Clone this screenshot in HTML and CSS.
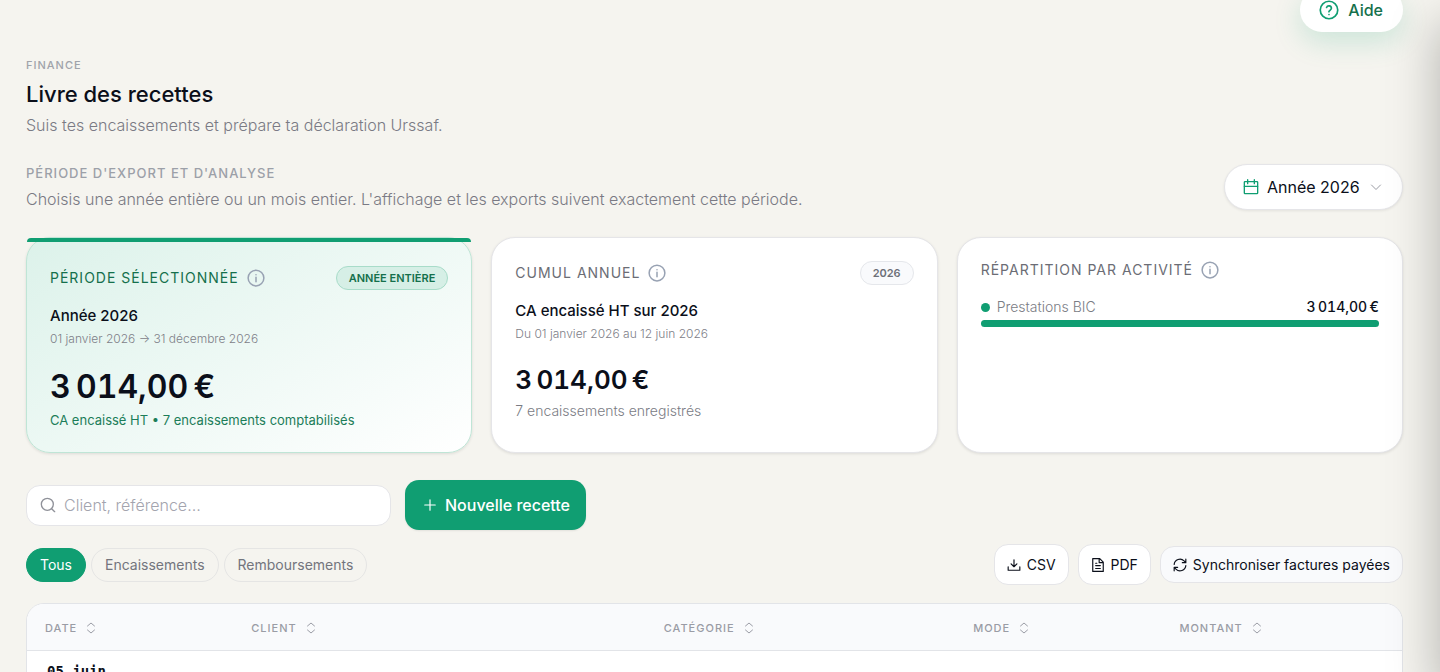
FILE: index.html
```html
<!DOCTYPE html>
<html lang="fr">

<head>
    <meta charset="UTF-8">
    <meta name="viewport" content="width=device-width, initial-scale=1.0">
    <title>Livre des recettes</title>
    <link rel="stylesheet" href="styles.css">
</head>

<body>
    <main class="page">
        <div class="topbar">
            <button type="button" class="help">
                <svg class="icon" width="20" height="20" viewBox="0 0 24 24"><circle cx="12" cy="12" r="10.500"/><path d="M9.1 9a3 3 0 0 1 5.8 1c0 2-3 2.6-3 4"/><path d="M12 17.500h.01"/></svg>
                Aide
            </button>
        </div>

        <header class="header">
            <p class="eyebrow">FINANCE</p>
            <h1>Livre des recettes</h1>
            <p class="text">Suis tes encaissements et prépare ta déclaration Urssaf.</p>
        </header>

        <section class="period">
            <div>
                <h2 class="label">PÉRIODE D'EXPORT ET D'ANALYSE</h2>
                <p class="text">Choisis une année entière ou un mois entier. L'affichage et les exports suivent exactement cette période.</p>
            </div>
            <div class="period-select">
                <svg class="icon green" width="16" height="16" viewBox="0 0 24 24"><rect x="2" y="4" width="20" height="18" rx="1"/><path d="M7 1v6M17 1v6M2 11h20"/></svg>
                <select aria-label="Période">
                    <option>Année 2026</option>
                </select>
                <svg class="icon chevron" width="12" height="12" viewBox="0 0 24 24"><path d="m3 8 9 9 9-9"/></svg>
            </div>
        </section>

        <section class="cards">
            <article class="card selected">
                <div class="card-head">
                    <h2 class="label">PÉRIODE SÉLECTIONNÉE</h2>
                    <svg class="icon info" width="18" height="18" viewBox="0 0 24 24"><circle cx="12" cy="12" r="10.500"/><path d="M12 11v6M12 7.500h.01"/></svg>
                    <span class="badge">ANNÉE ENTIÈRE</span>
                </div>
                <h3>Année 2026</h3>
                <p class="dates">01 janvier 2026 → 31 décembre 2026</p>
                <p class="amount big">3&#8239;014,00&#8239;€</p>
                <p class="note">CA encaissé HT • 7 encaissements comptabilisés</p>
            </article>

            <article class="card">
                <div class="card-head">
                    <h2 class="label">CUMUL ANNUEL</h2>
                    <svg class="icon info" width="18" height="18" viewBox="0 0 24 24"><circle cx="12" cy="12" r="10.500"/><path d="M12 11v6M12 7.500h.01"/></svg>
                    <span class="badge">2026</span>
                </div>
                <h3>CA encaissé HT sur 2026</h3>
                <p class="dates">Du 01 janvier 2026 au 12 juin 2026</p>
                <p class="amount">3&#8239;014,00&#8239;€</p>
                <p class="note">7 encaissements enregistrés</p>
            </article>

            <article class="card">
                <div class="card-head short">
                    <h2 class="label">RÉPARTITION PAR ACTIVITÉ</h2>
                    <svg class="icon info" width="18" height="18" viewBox="0 0 24 24"><circle cx="12" cy="12" r="10.500"/><path d="M12 11v6M12 7.500h.01"/></svg>
                </div>
                <div class="activity">
                    <span class="dot"></span>
                    <span class="activity-name">Prestations BIC</span>
                    <span class="activity-amount">3&#8239;014,00&#8239;€</span>
                </div>
                <div class="bar">
                    <div class="bar-fill" style="width: 100%"></div>
                </div>
            </article>
        </section>

        <div class="actions">
            <div class="search">
                <svg class="icon" width="16" height="16" viewBox="0 0 24 24"><circle cx="11" cy="11" r="9"/><path d="m17.500 17.500 4.500 4.500"/></svg>
                <input type="search" placeholder="Client, référence…" aria-label="Rechercher une recette">
            </div>
            <button type="button" class="primary">
                <svg class="icon" width="14" height="14" viewBox="0 0 24 24"><path d="M12 3v18M3 12h18"/></svg>
                Nouvelle recette
            </button>
        </div>

        <div class="filters">
            <button type="button" class="chip active">Tous</button>
            <button type="button" class="chip">Encaissements</button>
            <button type="button" class="chip">Remboursements</button>
            <div class="exports">
                <button type="button" class="export">
                    <svg class="icon" width="14" height="14" viewBox="0 0 24 24"><path d="M12 3v12M7 10l5 5 5-5M2 15v6h20v-6"/></svg>
                    CSV
                </button>
                <button type="button" class="export">
                    <svg class="icon" width="14" height="14" viewBox="0 0 24 24"><path d="M3 1h12l6 6v16H3zM14 1v7h7M8 9h2M8 13h8M8 18h8"/></svg>
                    PDF
                </button>
                <button type="button" class="export sync">
                    <svg class="icon" width="14" height="14" viewBox="0 0 24 24"><path d="M2 11a10 10 0 0 1 17-6l3 3M22 2v6h-6M22 13a10 10 0 0 1-17 6l-3-3M2 22v-6h6"/></svg>
                    Synchroniser factures payées
                </button>
            </div>
        </div>

        <div class="table-box">
            <table>
                <thead>
                    <tr>
                        <th class="col-date"><button type="button">DATE <svg class="icon" width="10" height="12" viewBox="0 0 20 24"><path d="m3 8 7-6 7 6M3 16l7 6 7-6"/></svg></button></th>
                        <th class="col-client"><button type="button">CLIENT <svg class="icon" width="10" height="12" viewBox="0 0 20 24"><path d="m3 8 7-6 7 6M3 16l7 6 7-6"/></svg></button></th>
                        <th class="col-category"><button type="button">CATÉGORIE <svg class="icon" width="10" height="12" viewBox="0 0 20 24"><path d="m3 8 7-6 7 6M3 16l7 6 7-6"/></svg></button></th>
                        <th class="col-mode"><button type="button">MODE <svg class="icon" width="10" height="12" viewBox="0 0 20 24"><path d="m3 8 7-6 7 6M3 16l7 6 7-6"/></svg></button></th>
                        <th><button type="button">MONTANT <svg class="icon" width="10" height="12" viewBox="0 0 20 24"><path d="m3 8 7-6 7 6M3 16l7 6 7-6"/></svg></button></th>
                    </tr>
                </thead>
                <tbody>
                    <tr>
                        <td class="date">05 juin</td>
                        <td></td>
                        <td></td>
                        <td></td>
                        <td></td>
                    </tr>
                </tbody>
            </table>
        </div>
    </main>
    <aside class="drawer"></aside>
</body>

</html>
```

FILE: styles.css
```css
* {
    box-sizing: border-box;
}

body {
    margin: 0;
    height: 100vh;
    overflow: hidden;
    background: #f5f4ef;
    color: #0b0f1a;
    font-family: Inter, "Noto Sans", sans-serif;
    font-size: 16px;
    line-height: 24px;
}

h1, h2, h3, p {
    margin: 0;
}

button, input, select {
    font: inherit;
    color: inherit;
}

button {
    display: inline-flex;
    align-items: center;
    border: none;
    padding: 0;
    background: none;
    white-space: nowrap;
    cursor: pointer;
}

.icon {
    flex: none;
    fill: none;
    stroke: currentColor;
    stroke-width: 2;
    stroke-linecap: round;
    stroke-linejoin: round;
}

.page {
    padding: 0 37px 0 26px;
}

/* top of the page */
.topbar {
    display: flex;
    justify-content: flex-end;
    align-items: flex-end;
    height: 32px;
}

.help {
    gap: 9px;
    height: 44px;
    padding: 0 20px 0 19px;
    border-radius: 22px;
    background: #fff;
    color: #15704c;
    font-weight: 500;
    box-shadow: 0 10px 28px rgba(16, 158, 114, 0.18);
}

.help .icon {
    color: #109e72;
}

.header {
    padding-top: 25px;
}

.eyebrow {
    color: #a0a3aa;
    font-size: 11px;
    line-height: 16px;
    font-weight: 500;
    letter-spacing: 1px;
}

h1 {
    margin: 5px 0 3px;
    font-size: 22px;
    line-height: 32px;
    font-weight: 500;
}

.text {
    color: #7a7a84;
    font-size: 16px;
    font-weight: 300;
}

.label {
    color: #9ca0a8;
    font-size: 13px;
    line-height: 20px;
    font-weight: 500;
    letter-spacing: 1px;
}

.period {
    display: flex;
    justify-content: space-between;
    align-items: center;
    margin: 26px 0;
}

.period .text {
    margin-top: 4px;
}

.period-select {
    display: flex;
    align-items: center;
    height: 46px;
    padding: 0 20px 0 18px;
    border: 1px solid #e5e5e8;
    border-radius: 23px;
    background: #fff;
    box-shadow: 0 1px 3px rgba(0, 0, 0, 0.08);
}

.period-select select {
    appearance: none;
    margin: 0 10px 0 8px;
    padding: 0;
    border: none;
    background: none;
    font-weight: 400;
}

.green {
    color: #109e72;
}

.chevron {
    color: #9a9ca4;
}

/* cards */
.cards {
    display: grid;
    grid-template-columns: repeat(3, 1fr);
    gap: 19px;
}

.card {
    min-height: 216px;
    padding: 23px 23px 20px;
    border: 1px solid #e5e5e8;
    border-radius: 24px;
    background: #fff;
    box-shadow: 0 1px 3px rgba(0, 0, 0, 0.1);
}

.card-head {
    display: flex;
    align-items: center;
    gap: 8px;
    height: 24px;
    margin-bottom: 14px;
}

.card-head.short {
    height: 18px;
    margin-bottom: 16px;
}

.card .label {
    color: #6b6d75;
    font-size: 14px;
    font-weight: 400;
}

.info {
    color: #98a2b3;
}

.badge {
    margin-left: auto;
    padding: 0 12px;
    border: 1px solid #e5e7eb;
    border-radius: 12px;
    background: #f9fafc;
    color: #6d7078;
    font-size: 11px;
    line-height: 22px;
    font-weight: 600;
}

.card h3 {
    font-size: 15px;
    line-height: 24px;
    font-weight: 500;
}

.dates {
    color: #7e8088;
    font-size: 12px;
    line-height: 22px;
    font-weight: 300;
}

.amount {
    margin-top: 17px;
    font-size: 26px;
    line-height: 36px;
    font-weight: 600;
    font-variant-numeric: tabular-nums;
}

.amount.big {
    font-size: 32px;
    line-height: 40px;
}

.note {
    margin-top: 3px;
    color: #7a7c84;
    font-size: 14px;
    line-height: 20px;
    font-weight: 300;
}

.selected {
    position: relative;
    padding-top: 28px;
    border-color: #bfe5d6;
    background: linear-gradient(150deg, #dcf2ea, #fff);
}

.selected::before {
    content: "";
    position: absolute;
    top: 0;
    left: 0;
    right: 0;
    height: 4px;
    border-radius: 4px 4px 0 0;
    background: #109e72;
}

.selected .label {
    color: #15704c;
}

.selected .badge {
    border-color: #a8dcc9;
    background: #d6efe6;
    color: #15704c;
}

.selected .note {
    color: #1c7d59;
    font-size: 13px;
    font-weight: 400;
}

.activity {
    display: flex;
    align-items: center;
    height: 24px;
    font-size: 14px;
}

.dot {
    width: 9px;
    height: 9px;
    margin-right: 7px;
    border-radius: 50%;
    background: #109e72;
}

.activity-name {
    color: #7a7c84;
    font-weight: 300;
}

.activity-amount {
    margin-left: auto;
    font-weight: 500;
    font-variant-numeric: tabular-nums;
}

.bar {
    height: 7px;
    margin-top: 1px;
    border-radius: 4px;
    background: #eef0f3;
}

.bar-fill {
    height: 100%;
    border-radius: 4px;
    background: #109e72;
}

/* search and filters */
.actions {
    display: flex;
    align-items: center;
    gap: 14px;
    margin-top: 27px;
}

.search {
    display: flex;
    align-items: center;
    gap: 8px;
    width: 365px;
    height: 41px;
    padding: 0 13px;
    border: 1px solid #e5e5e8;
    border-radius: 14px;
    background: #fff;
    color: #8f9199;
}

.search input {
    flex: 1;
    min-width: 0;
    padding: 0;
    border: none;
    outline: none;
    background: none;
    font-weight: 300;
}

.search input::placeholder {
    color: #a3a4ae;
}

.primary {
    gap: 8px;
    height: 50px;
    padding: 0 16px 0 18px;
    border-radius: 14px;
    background: #109e72;
    color: #fff;
    font-weight: 500;
    box-shadow: 0 1px 2px rgba(0, 0, 0, 0.08);
}

.filters {
    display: flex;
    align-items: center;
    gap: 5px;
    margin-top: 14px;
    font-size: 14px;
}

.chip {
    height: 34px;
    padding: 0 13px;
    border: 1px solid #e5e5e4;
    border-radius: 17px;
    color: #73757d;
}

.chip.active {
    border-color: #109e72;
    background: #109e72;
    color: #fff;
}

.exports {
    display: flex;
    align-items: center;
    gap: 9px;
    margin-left: auto;
}

.export {
    gap: 6px;
    height: 41px;
    padding: 0 12px;
    border: 1px solid #e5e5e8;
    border-radius: 14px;
    background: #fff;
}

.sync {
    height: 37px;
    background: #f9fafc;
}

/* table */
.table-box {
    margin-top: 18px;
    border: 1px solid #e2e4e8;
    border-radius: 18px;
    background: #fff;
    overflow: hidden;
}

table {
    width: 100%;
    border-collapse: collapse;
    table-layout: fixed;
}

th {
    height: 46px;
    padding: 0 18px;
    border-bottom: 1px solid #e2e4e8;
    background: #f9fafc;
    text-align: left;
    line-height: 16px;
}

th button {
    gap: 9px;
    color: #9a9ca5;
    font-size: 11px;
    font-weight: 500;
    letter-spacing: 1px;
}

.col-date, .col-mode {
    width: 15%;
}

.col-client {
    width: 30%;
}

.col-category {
    width: 22.5%;
}

td {
    padding: 8px 20px 20px;
}

.date {
    font-family: "DejaVu Sans Mono", monospace;
    font-size: 14px;
    font-weight: 700;
}

/* closed side drawer, only its shadow shows */
.drawer {
    position: fixed;
    top: 0;
    left: 100%;
    width: 320px;
    height: 100vh;
    box-shadow: 0 24px 48px rgba(0, 0, 0, 0.28);
}
```
